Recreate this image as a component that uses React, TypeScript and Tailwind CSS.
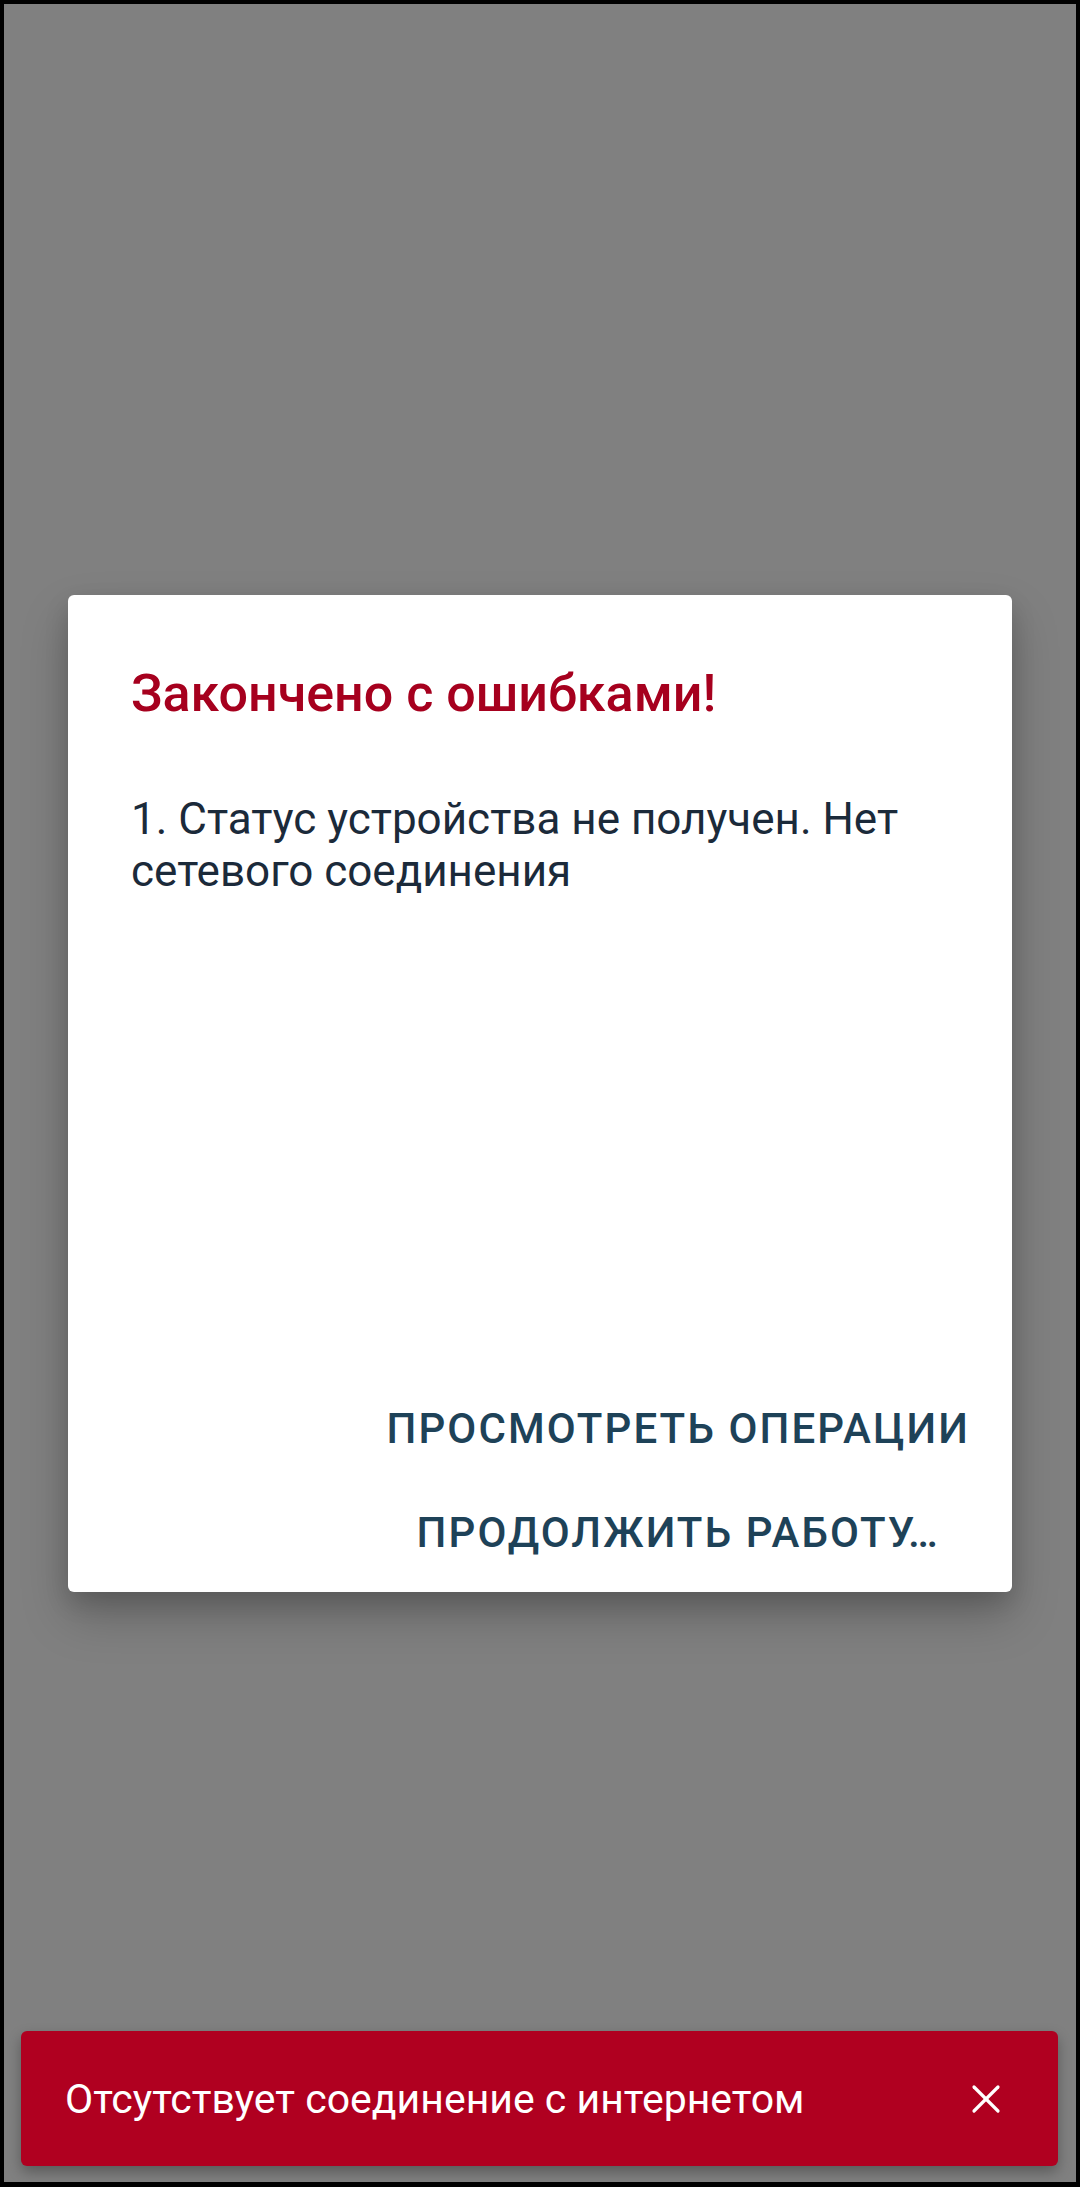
import { X } from "lucide-react";

const FONT = "font-['Roboto','Noto_Sans',sans-serif]";

export default function App() {
  return (
    <div className={`w-[1080px] h-[2187px] bg-black border-x-4 border-t-4 border-b-[5px] border-black ${FONT}`}>
      <div className="relative w-full h-full bg-[#808080] flex items-center justify-center">
        {/* Dialog */}
        <div className="w-[944px] h-[997px] bg-white rounded-[6px] flex flex-col shadow-[0_24px_48px_rgba(0,0,0,0.22),0_10px_24px_rgba(0,0,0,0.14)]">
          <h2 className="pt-[68px] pl-[63px] pr-[40px] text-[52px] leading-[61px] font-medium text-[#A6001E]">
            Закончено с ошибками!
          </h2>
          <p className="mt-[69px] pl-[63px] pr-[50px] text-[44px] leading-[52px] text-[#1B2A3A]">
            1. Статус устройства не получен. Нет сетевого соединения
          </p>
          <div className="flex-1" />
          <div className="flex justify-end pr-[17px] pb-[35px]">
            <div className="flex flex-col gap-[55px]">
              <button className="px-[25px] text-center text-[42px] leading-[49px] font-medium tracking-[0.05em] text-[#1E4258]">
                ПРОСМОТРЕТЬ ОПЕРАЦИИ
              </button>
              <button className="px-[25px] text-center text-[42px] leading-[49px] font-medium tracking-[0.05em] text-[#1E4258]">
                ПРОДОЛЖИТЬ РАБОТУ…
              </button>
            </div>
          </div>
        </div>

        {/* Snackbar */}
        <div className="absolute left-[17px] right-[18px] bottom-[16px] h-[135px] bg-[#B00020] rounded-[6px] flex items-center pl-[44px] pr-[48px] shadow-[0_6px_14px_rgba(0,0,0,0.3)]">
          <span className="flex-1 text-[41px] leading-[48px] text-white">Отсутствует соединение с интернетом</span>
          <X size={48} strokeWidth={1.6} className="text-white" />
        </div>
      </div>
    </div>
  );
}
